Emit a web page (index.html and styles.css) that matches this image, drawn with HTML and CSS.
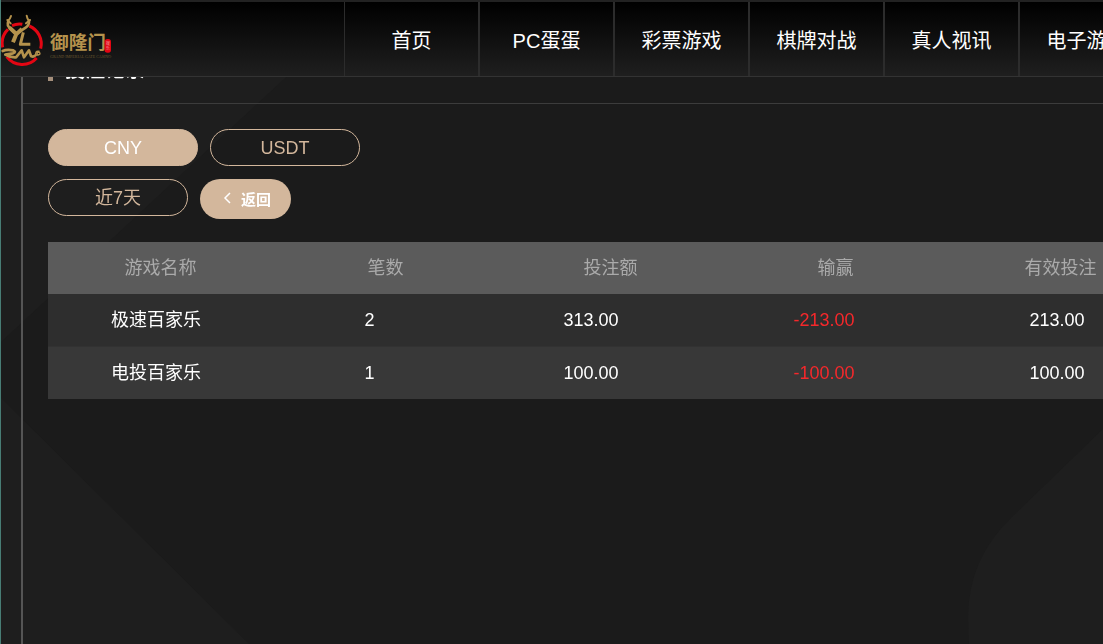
FILE: index.html
```html
<!DOCTYPE html>
<html lang="zh-CN">
<head>
  <meta charset="UTF-8">
  <meta name="viewport" content="width=device-width, initial-scale=1.0">
  <title>投注记录</title>
  <link rel="stylesheet" href="styles.css">
</head>
<body>
  <svg class="backdrop" viewBox="0 0 1103 644" preserveAspectRatio="xMinYMin slice" aria-hidden="true">
    <path d="M0 0H368L0 342Z"/>
    <path d="M0 398L248 644H0Z"/>
    <path d="M1103 428L1012 516Q967 558 967 618L968 644H1103Z"/>
  </svg>

  <header class="header">
    <a class="logo" href="#" aria-label="御隆门">
      <svg viewBox="0 6 360 222">
        <g fill="none" stroke="#e30613" stroke-width="9">
          <path d="M36 77Q52 70 67 73"/>
          <path d="M88 78A58 58 0 0 1 122 146"/>
          <path d="M24 88A58 58 0 0 0 8 142"/>
          <path d="M20 170A58 58 0 0 0 110 174"/>
        </g>
        <g fill="none" stroke="#b5924c" stroke-linejoin="round">
          <path stroke-width="6" stroke-linecap="round" d="M33 48Q30 58 24 63M22 60L32 70M80 47Q82 58 87 63M90 60L78 70"/>
          <path stroke-width="8" stroke-linecap="round" d="M25 63Q20 78 30 84L45 98M87 62Q88 76 78 82L60 94"/>
          <path stroke-width="12" d="M28 82L49 102L39 127M47 104L66 87"/>
          <path stroke-width="9" d="M70 97L61 133H91"/>
          <path stroke-width="8" stroke-linecap="round" d="M8 153Q20 147 40 151Q50 156 39 160L16 164Q30 173 48 172L65 151L72 172L87 151L93 168Q100 172 106 166"/>
          <path stroke-width="4" d="M119 154Q108 151 107 160T119 163Q122 158 116 157T112 163"/>
        </g>
        <text class="logo-name" x="150" y="148">御隆门</text>
        <rect x="314" y="117" width="19" height="41" rx="8" fill="#e30613"/>
        <text class="logo-seal" x="318" y="134">娱<tspan x="318" dy="15">乐</tspan></text>
        <text class="logo-sub" x="150" y="174">GRAND IMPERIAL GATE CASINO</text>
      </svg>
    </a>
    <nav class="nav">
      <a href="#">首页</a>
      <a href="#">PC蛋蛋</a>
      <a href="#">彩票游戏</a>
      <a href="#">棋牌对战</a>
      <a href="#">真人视讯</a>
      <a href="#">电子游戏</a>
    </nav>
  </header>

  <main class="panel">
    <h1 class="panel-title">投注记录</h1>

    <div class="content">
      <div class="filters">
        <button type="button" class="pill pill-active">CNY</button>
        <button type="button" class="pill">USDT</button>
      </div>
      <div class="filters">
        <button type="button" class="pill pill-date">近7天</button>
        <button type="button" class="back">
          <svg width="8" height="12" viewBox="0 0 8 12" fill="none" stroke="currentColor" stroke-width="1.5" aria-hidden="true"><path d="M7 1L2 6L7 11"/></svg>
          返回
        </button>
      </div>

      <table class="records">
        <thead>
          <tr><th>游戏名称</th><th>笔数</th><th>投注额</th><th>输赢</th><th>有效投注</th></tr>
        </thead>
        <tbody>
          <tr><td>极速百家乐</td><td>2</td><td>313.00</td><td class="loss">-213.00</td><td>213.00</td></tr>
          <tr><td>电投百家乐</td><td>1</td><td>100.00</td><td class="loss">-100.00</td><td>100.00</td></tr>
        </tbody>
      </table>
    </div>
  </main>
</body>
</html>
```
FILE: styles.css
```css
:root {
  --gold: #d3b79c;
  --bg: #1b1b1b;
  --line: #3c3c3c;
}

* {
  box-sizing: border-box;
}

body {
  margin: 0;
  min-height: 100vh;
  display: flex;
  background: var(--bg);
  border-left: 1px solid #487d75;
  font-family: "Liberation Sans", "Noto Sans CJK SC", sans-serif;
  font-size: 18px;
  color: #fff;
  overflow: hidden;
}

.backdrop {
  position: fixed;
  inset: 0 0 0 1px;
  width: 100%;
  height: 100%;
  z-index: -1;
  fill: #1e1e1e;
}

/* header */
.header {
  position: fixed;
  top: 0;
  left: 1px;
  right: 0;
  z-index: 10;
  display: flex;
  border-top: 2px solid #222;
  border-bottom: 1px solid #333;
  background: linear-gradient(#000, #1f1f1f);
  overflow: hidden;
}

.logo {
  flex: none;
  width: 344px;
  height: 74px;
  border-right: 1px solid #2c2c2c;
}

.logo svg {
  display: block;
  width: 120px;
  height: 74px;
  margin-left: -1px;
}

.logo-name {
  font-size: 56px;
  font-weight: 700;
  fill: #b5924c;
}

.logo-seal {
  font-size: 12px;
  fill: #f3a0a0;
}

.logo-sub {
  font-family: "Liberation Serif", serif;
  font-size: 12px;
  fill: #6b572f;
}

.nav {
  display: flex;
}

.nav a {
  flex: none;
  width: 135px;
  height: 74px;
  border-right: 2px solid #2c2c2c;
  font-size: 20px;
  line-height: 78px;
  text-align: center;
  color: #fff;
  text-decoration: none;
}

/* panel */
.panel {
  flex: 1;
  min-width: 0;
  margin-left: 20px;
  border-left: 2px solid #555;
}

.panel-title {
  display: flex;
  align-items: center;
  gap: 12px;
  height: 104px;
  margin: 0;
  padding: 34px 0 0 25px;
  border-bottom: 1px solid var(--line);
  font-size: 20px;
  font-weight: 700;
}

.panel-title::before {
  content: "";
  width: 5px;
  height: 24px;
  background: #a58f7b;
}

.content {
  padding: 25px 0 0 25px;
}

.filters {
  display: flex;
  align-items: flex-start;
  gap: 12px;
  margin-bottom: 13px;
}

.pill {
  width: 150px;
  height: 37px;
  padding: 0;
  border: 1px solid var(--gold);
  border-radius: 19px;
  background: transparent;
  font: inherit;
  line-height: 34px;
  color: var(--gold);
  cursor: pointer;
}

.pill-active {
  background: var(--gold);
  color: #fff;
}

.pill-date {
  width: 140px;
}

.back {
  display: flex;
  align-items: center;
  justify-content: center;
  gap: 10px;
  width: 91px;
  height: 40px;
  padding: 0 0 2px 3px;
  border: none;
  border-radius: 20px;
  background: var(--gold);
  font: inherit;
  font-size: 15px;
  font-weight: 700;
  color: #fff;
  cursor: pointer;
}

/* table */
.records {
  display: block;
  width: 1125px;
  margin-top: 23px;
}

.records thead,
.records tbody {
  display: block;
}

.records tr {
  display: grid;
  line-height: 52px;
  text-align: center;
}

.records th,
.records td {
  padding: 0;
  font-weight: 400;
}

.records thead tr {
  grid-template-columns: repeat(5, 1fr);
  background: #5b5b5b;
  color: #aaa;
}

.records tbody tr {
  grid-template-columns: 216fr 211fr 232fr 234fr 232fr;
  background: #2e2e2e;
}

.records tbody tr:nth-child(even) {
  border-top: 1px solid #323232;
  background: #383838;
}

.records .loss {
  color: #f5282b;
}
```
